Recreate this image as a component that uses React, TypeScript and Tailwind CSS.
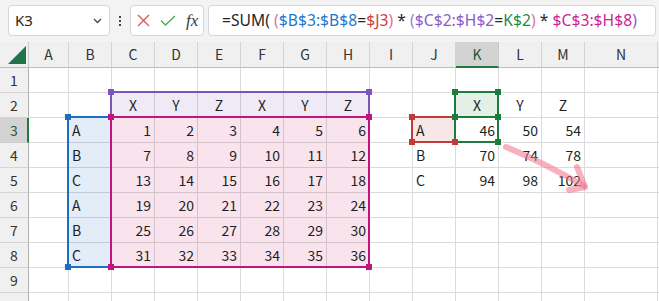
import React from "react";

const COLS = ["A", "B", "C", "D", "E", "F", "G", "H", "I", "J", "K", "L", "M", "N", "O"];
const ROWS = [1, 2, 3, 4, 5, 6, 7, 8, 9, 10];

type Cell = { v: string; align: "left" | "right" | "center" };

function buildCells(): Record<string, Cell> {
  const cells: Record<string, Cell> = {};
  const hdr = ["X", "Y", "Z", "X", "Y", "Z"];
  ["C", "D", "E", "F", "G", "H"].forEach((c, i) => {
    cells[c + "2"] = { v: hdr[i], align: "center" };
    for (let r = 3; r <= 8; r++) {
      cells[c + r] = { v: String((r - 3) * 6 + i + 1), align: "right" };
    }
  });
  ["A", "B", "C", "A", "B", "C"].forEach((v, i) => {
    cells["B" + (i + 3)] = { v, align: "left" };
  });
  ["X", "Y", "Z"].forEach((v, i) => {
    cells[["K", "L", "M"][i] + "2"] = { v, align: "center" };
  });
  ["A", "B", "C"].forEach((v, i) => {
    cells["J" + (i + 3)] = { v, align: "left" };
  });
  const sums = [
    [46, 50, 54],
    [70, 74, 78],
    [94, 98, 102],
  ];
  sums.forEach((row, ri) =>
    row.forEach((n, ci) => {
      cells[["K", "L", "M"][ci] + (ri + 3)] = { v: String(n), align: "right" };
    })
  );
  return cells;
}

const CELLS = buildCells();

function fillFor(col: string, row: number) {
  if (col === "B" && row >= 3 && row <= 8) return "bg-[#e2edf8]";
  if (row === 2 && "CDEFGH".includes(col)) return "bg-[#efeaf6]";
  if (row >= 3 && row <= 8 && "CDEFGH".includes(col)) return "bg-[#f9e4ee]";
  if (col === "K" && row === 2) return "bg-[#e4efe6]";
  if (col === "J" && row === 3) return "bg-[#f8e7e7]";
  return "bg-white";
}

// range highlight boxes, in grid coordinates (grid lines)
const BOXES = [
  { l: 68, r: 111, t: 75, b: 225, color: "border-[#1c6fc0]" },
  { l: 111, r: 369, t: 50, b: 75, color: "border-[#7c55bb]" },
  { l: 111, r: 369, t: 75, b: 225, color: "border-[#c0157c]" },
  { l: 412, r: 455, t: 75, b: 100, color: "border-[#c2393b]" },
  { l: 455, r: 498, t: 50, b: 75, color: "border-[#1f7a3e]" },
  { l: 455, r: 498, t: 75, b: 100, color: "border-[#1f7a3e]" },
];

const HANDLES = [
  { x: 68, y: 75, c: "bg-[#1c6fc0]" },
  { x: 68, y: 225, c: "bg-[#1c6fc0]" },
  { x: 111, y: 50, c: "bg-[#7c55bb]" },
  { x: 369, y: 50, c: "bg-[#7c55bb]" },
  { x: 111, y: 75, c: "bg-[#c0157c]" },
  { x: 369, y: 75, c: "bg-[#c0157c]" },
  { x: 111, y: 225, c: "bg-[#c0157c]" },
  { x: 369, y: 225, c: "bg-[#c0157c]" },
  { x: 412, y: 75, c: "bg-[#c2393b]" },
  { x: 412, y: 100, c: "bg-[#c2393b]" },
  { x: 455, y: 100, c: "bg-[#c2393b]" },
  { x: 455, y: 50, c: "bg-[#1f7a3e]" },
  { x: 498, y: 50, c: "bg-[#1f7a3e]" },
  { x: 455, y: 75, c: "bg-[#1f7a3e]" },
  { x: 498, y: 75, c: "bg-[#1f7a3e]" },
  { x: 498, y: 100, c: "bg-[#1f7a3e]" },
];

function FormulaBar() {
  return (
    <div className="flex h-[42px] items-start pt-[5px] pl-2 font-['Noto_Sans',sans-serif]">
      {/* Name box */}
      <div className="flex h-[31px] w-[102px] items-center justify-between rounded-[4px] border border-[#d6d6d6] bg-white pl-[6px] pr-[7px]">
        <span className="text-[15px] text-[#262626]">K3</span>
        <svg width="9" height="6" viewBox="0 0 9 6" fill="none" stroke="#444" strokeWidth="1.3">
          <path d="M1 1l3.5 3.5L8 1" />
        </svg>
      </div>
      <div className="flex h-[31px] w-[20px] flex-col items-center justify-center gap-[2px]">
        <span className="h-[2px] w-[2px] bg-[#444]" />
        <span className="h-[2px] w-[2px] bg-[#444]" />
        <span className="h-[2px] w-[2px] bg-[#444]" />
      </div>
      {/* cancel / enter / fx */}
      <div className="flex h-[31px] w-[74px] items-center gap-[10px] rounded-[4px] border border-[#d6d6d6] bg-white pl-[6px]">
        <svg width="13" height="13" viewBox="0 0 13 13" stroke="#e5575a" strokeWidth="1.4">
          <path d="M1 1l11 11M12 1L1 12" />
        </svg>
        <svg width="16" height="11" viewBox="0 0 16 11" fill="none" stroke="#53a95a" strokeWidth="1.4">
          <path d="M1 5.5l4.5 4.5L15 1" />
        </svg>
        <span className="font-['Liberation_Serif',serif] text-[17px] italic leading-none text-[#3a3a3a]">fx</span>
      </div>
      {/* formula */}
      <div className="ml-[4px] flex h-[31px] w-[448px] items-center rounded-[4px] border border-[#d6d6d6] bg-white pl-[13px] text-[15.6px] tracking-[0.05px] whitespace-pre text-[#262626]">
        <span>=SUM( </span>
        <span className="text-[#e0719b]">(</span>
        <span className="text-[#1c78d0]">$B$3:$B$8</span>
        <span>=</span>
        <span className="text-[#d13c3c]">$J3</span>
        <span className="text-[#e0719b]">)</span>
        <span> * </span>
        <span className="text-[#a07cd6]">(</span>
        <span className="text-[#8a5cc8]">$C$2:$H$2</span>
        <span>=</span>
        <span className="text-[#1f8a45]">K$2</span>
        <span className="text-[#e0719b]">)</span>
        <span> * </span>
        <span className="text-[#cc1f95]">$C$3:$H$8</span>
        <span className="text-[#8a5cc8]">)</span>
      </div>
    </div>
  );
}

function Sheet() {
  return (
    <div className="relative grid grid-cols-[29px_40px_repeat(12,43px)_73px_1fr] grid-rows-[26px_repeat(10,25px)] font-['Noto_Sans_CJK_JP',sans-serif] text-[14px] text-[#1f1f1f]">
      {/* corner */}
      <div className="relative border-r border-b border-r-[#c9c9c9] border-b-[#bcbcbc] bg-[#f0f0f0]">
        <svg className="absolute left-[8px] top-[4px]" width="18" height="18" viewBox="0 0 18 18">
          <path d="M18 0L18 18L0 18Z" fill="#21734a" />
        </svg>
      </div>
      {COLS.map((c) => (
        <div
          key={c}
          className={
            c === "K"
              ? "flex items-center justify-center border-r border-b-2 border-r-[#c9c9c9] border-b-[#1f7a3e] bg-[#d3d3d3] pt-[1px] text-[#17583a]"
              : "flex items-center justify-center border-r border-b border-r-[#d4d4d4] border-b-[#bcbcbc] bg-[#f0f0f0] text-[#333]"
          }
        >
          {c === "O" ? "" : c}
        </div>
      ))}
      {ROWS.map((r) => (
        <React.Fragment key={r}>
          <div
            className={
              r === 3
                ? "flex items-center justify-center border-r-2 border-b border-r-[#1f7a3e] border-b-[#cfcfcf] bg-[#d3d3d3] pl-[1px] text-[#17583a]"
                : "flex items-center justify-center border-r border-b border-r-[#b0b0b0] border-b-[#d4d4d4] bg-[#f0f0f0] text-[#333]"
            }
          >
            {r}
          </div>
          {COLS.map((c) => {
            const cell = CELLS[c + r];
            const align =
              cell?.align === "right"
                ? "justify-end pr-[3px]"
                : cell?.align === "center"
                ? "justify-center"
                : "justify-start pl-[3px]";
            return (
              <div
                key={c + r}
                className={`flex items-center border-r border-b border-black/[0.14] ${align} ${fillFor(c, r)}`}
              >
                {cell?.v}
              </div>
            );
          })}
        </React.Fragment>
      ))}

      {/* reference highlights */}
      {BOXES.map((b, i) => (
        <div
          key={i}
          className={`pointer-events-none absolute border-2 ${b.color}`}
          style={{ left: b.l - 1, top: b.t - 1, width: b.r - b.l + 2, height: b.b - b.t + 2 }}
        />
      ))}
      {HANDLES.map((h, i) => (
        <div
          key={i}
          className={`pointer-events-none absolute h-[6px] w-[6px] ${h.c}`}
          style={{ left: h.x - 3, top: h.y - 3 }}
        />
      ))}

      {/* hand-drawn arrow */}
      <svg className="pointer-events-none absolute left-0 top-0" width="659" height="259" viewBox="0 0 659 259" fill="none">
        <g stroke="#ee7088" strokeOpacity="0.55" strokeWidth="6" strokeLinecap="round" strokeLinejoin="round">
          <path d="M506 105 C 530 115, 556 128, 584 144" />
          <path d="M577 125 L585 145 L569 148" />
        </g>
      </svg>
    </div>
  );
}

export default function App() {
  return (
    <div className="h-[301px] w-[659px] overflow-hidden bg-[#f3f3f3]">
      <FormulaBar />
      <Sheet />
    </div>
  );
}
